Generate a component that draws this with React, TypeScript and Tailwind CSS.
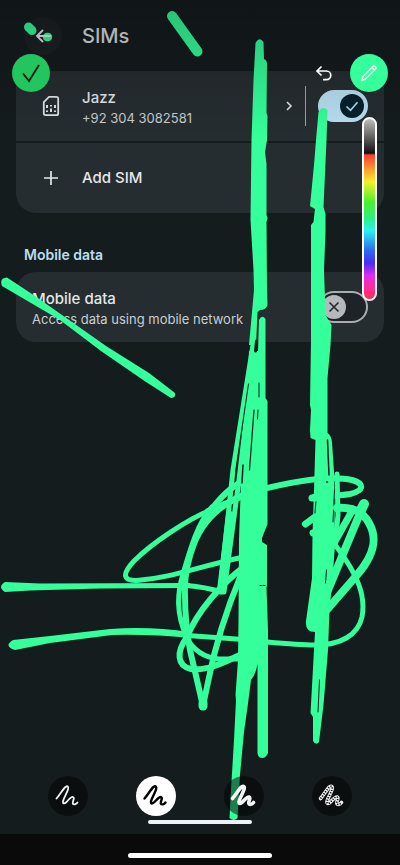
import React from 'react';

interface ToggleProps {
    label: string;
    defaultChecked?: boolean;
}

const INK = '#34ff9a';

const Toggle: React.FC<ToggleProps> = ({ label, defaultChecked = false }) => (
    <label className="relative block h-8 w-[50px] shrink-0 cursor-pointer">
        <input
            type="checkbox"
            aria-label={label}
            defaultChecked={defaultChecked}
            className="peer block h-8 w-[50px] appearance-none rounded-full border-2 border-[#a9adb1] bg-[#1d2326] checked:border-[#b9e0f2] checked:bg-[#b9e0f2]"
        />
        <span className="absolute top-1 left-1 flex size-6 items-center justify-center rounded-full bg-[#b5b9be] text-[#22282b] peer-checked:right-1 peer-checked:left-auto peer-checked:bg-[#06222e] peer-checked:text-[#b3dbee]">
            <svg viewBox="0 0 24 24" className="size-6" fill="none" stroke="currentColor" strokeWidth="1.6">
                {defaultChecked ? <path d="M6.5 12.5l4 3.8 7-8" /> : <path d="M7.5 7.5l9 9M16.5 7.5l-9 9" />}
            </svg>
        </span>
    </label>
);

const SimIcon = () => (
    <svg viewBox="0 0 22 22" className="size-[22px] shrink-0" fill="none" stroke="#e2e6e8" strokeWidth="1.8">
        <path d="M9 1.8h7.5a1.7 1.7 0 0 1 1.7 1.7v15a1.7 1.7 0 0 1-1.7 1.7h-11a1.7 1.7 0 0 1-1.7-1.7V7z" />
        <path d="M7 10v3M11 10v1.5M15 10v3M7 15.5V17M11 13.5V17M15 15.5V17" strokeWidth="2" />
    </svg>
);

// Freehand strokes over the settings page, in window coordinates
const InkLayer = () => (
    <svg
        viewBox="0 0 400 865"
        className="pointer-events-none absolute top-0 left-0 h-full w-full"
        preserveAspectRatio="xMidYMin meet"
        fill="none"
        stroke={INK}
        strokeLinecap="round"
        strokeLinejoin="round"
    >
        <path d="M28.500 27l3.500 3.500" strokeWidth="9" />
        <path d="M47 37h1" strokeWidth="8.500" />
        <path d="M172 16l25.500 35.500" strokeWidth="10" />

        {/* tapered lines on the left */}
        <g fill={INK} stroke="none">
            <path d="M7 277.500L35 296L106 346L149 373L175 393Q176 398 171 398L146 382L101 351L60 320L2 286Q-1 278 7 277.500z" />
            <path d="M5 582L40 583.500L190 583V588L100 588.500L30 590.500L5 592Q-3 587 5 582z" />
            <path d="M13 640L50 636L110 629Q150 626 190 632V638Q150 634 112 635L50 643L15 650Q3 646 13 640z" />
        </g>
        <path d="M187 585.500Q205 587 222 592" strokeWidth="5" />
        <path d="M187 635.500Q230 638 267 642Q300 645 315 645C341 645 358 635 362 617C366 596 358 575 336 546" strokeWidth="5" />

        {/* loops around the centre */}
        <path d="M244 557C200 566 172 578 137 580.500C125 581 120 576 134 561C152 543 188 519 211 510" strokeWidth="5" />
        <path d="M211 510C223 494 235 483 248 480" strokeWidth="6" />
        <path d="M208 511Q225 504 245 495" strokeWidth="6" />
        <path d="M247 493C300 479 335 476 352 480C366 484 363 491 350 494C338 496 325 496 314 497" strokeWidth="6" />
        <path d="M212 507C197 524 190 550 183 574C177 594 176 614 187 638" strokeWidth="5" />
        <path d="M243 495C218 506 202 523 194 544C187 562 184 577 185 596Q185 622 190 650L203 706L208 682Q218 630 241 575" strokeWidth="6" />
        <path d="M203 527Q208 513 216 507" strokeWidth="5" />
        <path d="M245 566C220 585 197 612 187 637C176 652 177 666 191 669C207 671 221 664 246 652" strokeWidth="6" />
        <path d="M186 637Q197 657 219 659H246" strokeWidth="5" />
        <path d="M253 345L233 470L220 592" strokeWidth="5" />
        <path d="M253 360L239 480L224 592" strokeWidth="5" />
        <path d="M252 390L242 475" strokeWidth="8" />
        <path d="M230 515L221 590" strokeWidth="8" />
        <path d="M203 703V706" strokeWidth="9" />

        {/* left column */}
        <g fill={INK} stroke="none">
            <path d="M255.500 43Q259.500 36 263.500 42L264 59Q267 60 267 64L266.500 113L267.500 116L267 140L265 152L266.500 164L266.500 215L267.500 218L266.500 222L267 290L267.500 305Q266 310 260 310L257.500 312L256 345L249 345L254 290L253.500 270L250.500 220L251 180L251.500 140L253.500 80z" />
            <path d="M259 320Q262 314 265.500 319L265.500 398L267.500 401V524L262 538V542L267 545V585L266.500 588L268 630V753Q266 758 262 758Q258 758 257.500 753L257.500 664Q256 674 251 680Q248 705 244 732L240 775L237.500 818Q234 822 229.500 818L231 790L234 740L236 700L235.500 695L238 660L238.500 620L239 540L241 480L247 405L249 351H258z" />
        </g>
        <g stroke="#151c1e" strokeWidth="1.500">
            <path d="M256.500 341L255.500 351" strokeWidth="3" />
            <path d="M248.500 384L235.500 472" strokeWidth="1" />
            <path d="M254 410L249.500 470" strokeWidth="1.200" />
            <path d="M259 383V397M258 410L257.500 419" strokeWidth="1" />
            <path d="M243 465L242 483" />
            <path d="M260 585.500h6" strokeWidth="1" strokeDasharray="2 1" />
        </g>

        {/* right column */}
        <g fill={INK} stroke="none">
            <path d="M318.500 112Q322 105 327.500 110L326.500 140L323.500 207L325.500 214V232L324 270L325.500 315L331.500 325L330.500 345L327.500 378V433Q331 435 332 442L334 472L335 545L332 585L329.500 610L328 650L323.500 705L319 742Q316 746 313 741L313 717L310.500 713L315 632Q305 632 306 621L312 578L312.500 535L314 490L315.500 440L310.500 438L310 430L311 410L310 405L311 340V225L313.500 222L315 209L310 206L314 165L316 140z" />
        </g>
        <path d="M327.500 440L329 475M326.500 482h1" stroke="#151c1e" strokeWidth="1.500" />
        <path d="M334.500 490L333 522M316 501L314.500 518M326.500 570L325.500 583" stroke="#151c1e" strokeWidth="1" />
        <path d="M319.500 680L318 712" stroke="#151c1e" strokeWidth="1" />
        <path d="M337 474L338 515L335 545" strokeWidth="5" />
        <path d="M315 498h-3M305.500 524L315 517M313 533L317 532" strokeWidth="7" />
        <path d="M337 508C350 507 362 510 369 523C377 537 376 553 357 575L325 612" strokeWidth="8" />
        <path d="M352 511L333 545" strokeWidth="7" />
        <path d="M364 504L353 530L326 595" strokeWidth="8" />
        <path d="M364 504L360 512" strokeWidth="10" />
    </svg>
);

const SQUIGGLE = 'M1.500 13.500C5 9.500 8 4 10.500 2C12.500 .5 14 1.500 13 4.500C12 8 8.500 13.500 8 16.500C7.800 19 9.500 19 11.500 17C14 14.500 16 11.500 18 12C20.500 13 17 16.500 17.800 18.500C18.500 20 21 19.500 22.500 17.500';

const brushes = [
    { name: 'Fine pen', width: 1.8, active: false, dotted: false },
    { name: 'Pen', width: 2.4, active: true, dotted: false },
    { name: 'Marker', width: 3.6, active: false, dotted: false },
    { name: 'Mosaic', width: 3.6, active: false, dotted: true },
];

const BrushButton: React.FC<{ brush: typeof brushes[number] }> = ({ brush }) => (
    <button
        aria-label={brush.name}
        aria-pressed={brush.active}
        className={`flex size-10 items-center justify-center rounded-full ${brush.active ? 'bg-white text-black' : 'bg-black/50 text-[#f4f4f4]'}`}
    >
        <svg viewBox="0 0 26 22" className="h-[22px] w-[26px] overflow-visible" fill="none" stroke="currentColor" strokeLinecap="round" strokeLinejoin="round">
            <path d={SQUIGGLE} strokeWidth={brush.width} />
            {brush.dotted && <path d={SQUIGGLE} stroke="#0a0d0e" strokeWidth="1.800" strokeDasharray="1.200 1.400" strokeLinecap="butt" />}
        </svg>
    </button>
);

const App: React.FC = () => (
    <div className="relative flex min-h-screen flex-col bg-[#151c1e] font-[Inter,sans-serif] text-[#e4e7e9]">
        <header className="flex h-[71px] items-center gap-5 px-6">
            <button aria-label="Back" className="size-[38px] rounded-full bg-[#1c2123]" />
            <h1 className="text-[20px] leading-7 font-medium text-[#d9dcde]">SIMs</h1>
        </header>

        <main className="flex flex-1 flex-col px-4">
            <section className="flex flex-col gap-[2px]">
                <div className="flex h-[70px] items-center bg-[#262d30] pr-4 pl-6">
                    <button className="flex flex-1 items-center gap-5 text-left">
                        <SimIcon />
                        <span className="flex flex-1 flex-col pt-1">
                            <span className="text-[15px] leading-5 font-medium">Jazz</span>
                            <span className="text-[13px] leading-5 text-[#c9cdd0]">+92 304 3082581</span>
                        </span>
                        <svg viewBox="0 0 12 12" className="size-3" fill="none" stroke="#e4e7e9" strokeWidth="1.600">
                            <path d="M4 2l4 4-4 4" />
                        </svg>
                    </button>
                    <div className="mr-3 ml-[10px] h-10 w-px bg-[#a0a4a7]" />
                    <Toggle label="Use Jazz SIM" defaultChecked />
                </div>
                <button className="flex h-[70px] items-center gap-5 rounded-b-[20px] bg-[#262d30] pr-4 pl-6 text-left">
                    <svg viewBox="0 0 22 22" className="size-[22px]" fill="none" stroke="#e4e7e9" strokeWidth="1.700">
                        <path d="M11 4v14M4 11h14" />
                    </svg>
                    <span className="text-[15px] leading-5 font-medium">Add SIM</span>
                </button>
            </section>

            <section className="pt-8">
                <h2 className="px-2 pb-[7px] text-[14px] leading-5 font-semibold text-[#b9dfee]">Mobile data</h2>
                <div className="flex h-[70px] items-center justify-between rounded-[20px] bg-[#262d30] px-4">
                    <span className="flex flex-col pt-1">
                        <span className="text-[15px] leading-5 font-medium">Mobile data</span>
                        <span className="text-[13px] leading-5 text-[#c9cdd0]">Access data using mobile network</span>
                    </span>
                    <Toggle label="Mobile data" />
                </div>
            </section>
        </main>

        <InkLayer />
        <div className="pointer-events-none absolute inset-x-0 top-0 h-[140px] bg-linear-to-b from-black/25 to-transparent" />
        <svg viewBox="0 0 20 20" className="pointer-events-none absolute top-[26px] left-[34px] size-5" fill="none" stroke="#b9bec0" strokeWidth="1.800">
            <path d="M17 10H3M9 4l-6 6 6 6" />
        </svg>

        {/* Floating drawing controls */}
        <div className="absolute inset-x-3 top-[54px] flex items-center">
            <button aria-label="Done" className="flex size-[38px] items-center justify-center rounded-full bg-[#22c55e]">
                <svg viewBox="0 0 24 24" className="size-6" fill="none" stroke="#07180e" strokeWidth="1.800">
                    <path d="M4 12.500l6 7.500L20 4" />
                </svg>
            </button>
            <button aria-label="Undo" className="mr-4 ml-auto">
                <svg viewBox="0 0 20 20" className="size-5" fill="none" stroke="#fff" strokeWidth="1.700">
                    <path d="M7.500 3.500L3 8l4.500 4.500M3 8h9.500a4.300 4.300 0 0 1 0 8.600H9" />
                </svg>
            </button>
            <button aria-label="Pen colour" className="flex size-[38px] items-center justify-center rounded-full bg-[#34ff9a]">
                <svg viewBox="0 0 20 20" className="size-5" fill="none" stroke="#e6fff1" strokeWidth="1.500" strokeLinejoin="round">
                    <path d="M2.500 17.500l1.500-4L15 2.500l2.500 2.500L6.500 16zM13 4.500l2.500 2.500" />
                </svg>
            </button>
        </div>
        <input
            type="range"
            aria-label="Ink colour"
            className="absolute top-[117px] right-[23px] h-[184px] w-[15px] appearance-none rounded-full border-2 border-white bg-[linear-gradient(to_bottom,#bdbdbd_0%,#111_19%,#ff3b30_20%,#ff9d2e_28%,#f3f02c_35%,#4cf02c_46%,#2cf080_55%,#2cf0f0_62%,#2c6cf0_73%,#4a2cf0_80%,#e02cf0_87%,#ff2c9a_94%,#ff2c50_100%)] [writing-mode:vertical-lr] [&::-webkit-slider-thumb]:appearance-none"
        />

        <div className="relative flex flex-col items-center gap-1 pb-[10px]">
            <div className="flex w-full justify-between px-12">
                {brushes.map((brush) => (
                    <BrushButton key={brush.name} brush={brush} />
                ))}
            </div>
            <div className="h-1 w-[104px] rounded-full bg-[#eef1f5]" />
        </div>
        <footer className="relative flex h-[31px] items-center justify-center bg-[#0a0a0a] pt-3">
            <div className="h-[5px] w-36 rounded-full bg-white" />
        </footer>
    </div>
);

export default App;
